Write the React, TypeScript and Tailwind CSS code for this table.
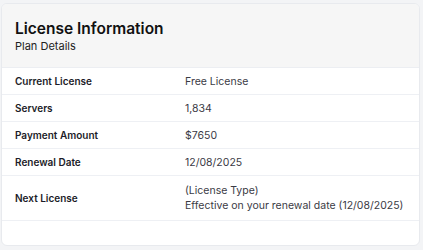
export default function App() {
  const rows = [
    { label: "Current License", value: ["Free License"] },
    { label: "Servers", value: ["1,834"] },
    { label: "Payment Amount", value: ["$7650"] },
    { label: "Renewal Date", value: ["12/08/2025"] },
    {
      label: "Next License",
      value: ["(License Type)", "Effective on your renewal date (12/08/2025)"],
    },
  ];

  return (
    <main
      className="w-[423px] h-[250px] bg-[#f3f4f6] pt-[3px] pl-[1px] pr-[3px] pb-[4px]"
      style={{ fontFamily: "Inter, 'Noto Sans', sans-serif" }}
    >
      <div className="h-full bg-white border border-[#e8eaee] rounded-md overflow-hidden flex flex-col">
        {/* Header */}
        <div className="bg-[#f6f6f6] border-b border-[#eceef2] h-[64px] px-[13px] pt-[15px]">
          <h1 className="text-[15.5px] leading-[20px] font-semibold text-[#111111]">
            License Information
          </h1>
          <p className="text-[11px] leading-[14px] text-[#222222]">Plan Details</p>
        </div>

        {/* Rows */}
        {rows.map((row) => (
          <div
            key={row.label}
            className={`flex items-center border-b border-[#eef0f4] px-[13px] ${
              row.value.length > 1 ? "py-[7px]" : "h-[27px]"
            }`}
          >
            <div className="w-[170px] text-[10px] font-semibold text-[#1c1c28]">
              {row.label}
            </div>
            <div className="text-[10.5px] leading-[15px] text-[#3a3a44]">
              {row.value.map((v) => (
                <div key={v}>{v}</div>
              ))}
            </div>
          </div>
        ))}
      </div>
    </main>
  );
}
